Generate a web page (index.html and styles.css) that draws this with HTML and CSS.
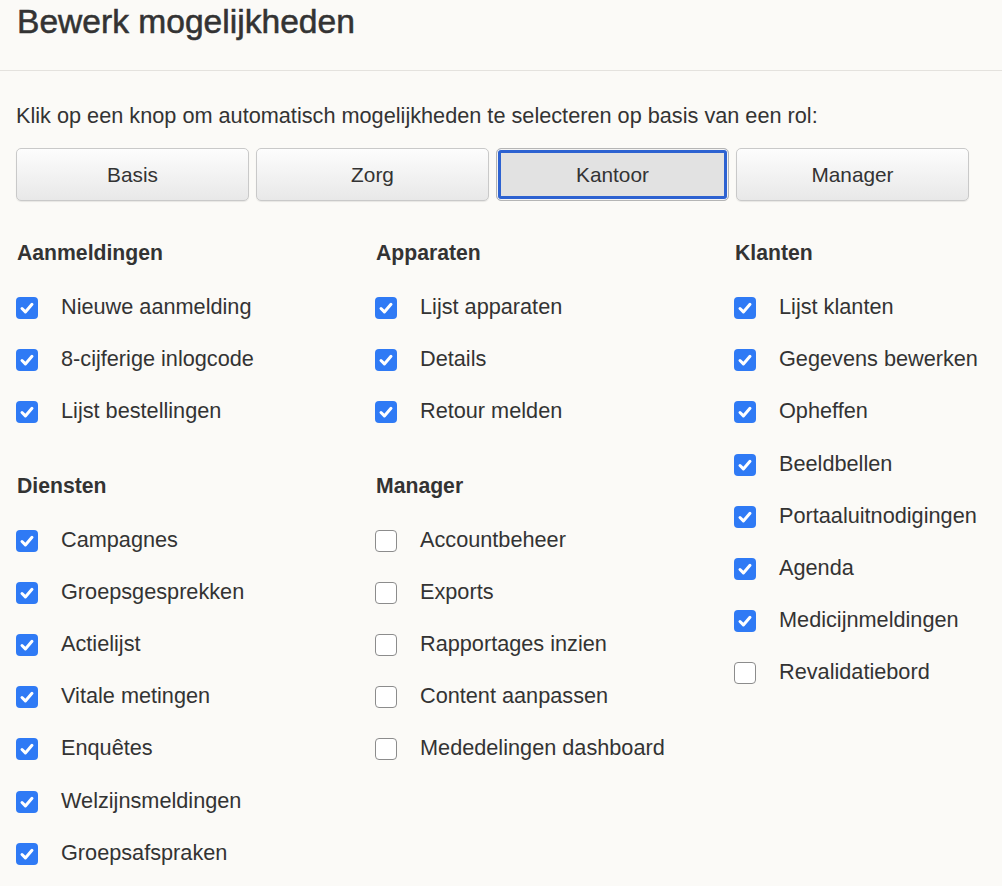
FILE: index.html
```html
<!DOCTYPE html>
<html lang="nl">
<head>
    <meta charset="UTF-8">
    <meta name="viewport" content="width=device-width, initial-scale=1.0">
    <title>Bewerk mogelijkheden</title>
    <link rel="stylesheet" href="styles.css">
</head>
<body>

    <div class="header">
        <h1>Bewerk mogelijkheden</h1>
    </div>

    <div class="content">
        <p class="intro">Klik op een knop om automatisch mogelijkheden te selecteren op basis van een rol:</p>

        <div class="roles">
            <button class="role">Basis</button>
            <button class="role">Zorg</button>
            <button class="role active">Kantoor</button>
            <button class="role">Manager</button>
        </div>

        <div class="columns">
            <div class="column">
                <h2>Aanmeldingen</h2>
                <label class="item"><span class="box checked"><svg viewBox="0 0 22 22"><path d="M6 11.5l3.4 3.4 6.6-7.6"/></svg></span>Nieuwe aanmelding</label>
                <label class="item"><span class="box checked"><svg viewBox="0 0 22 22"><path d="M6 11.5l3.4 3.4 6.6-7.6"/></svg></span>8-cijferige inlogcode</label>
                <label class="item"><span class="box checked"><svg viewBox="0 0 22 22"><path d="M6 11.5l3.4 3.4 6.6-7.6"/></svg></span>Lijst bestellingen</label>

                <h2 class="next">Diensten</h2>
                <label class="item"><span class="box checked"><svg viewBox="0 0 22 22"><path d="M6 11.5l3.4 3.4 6.6-7.6"/></svg></span>Campagnes</label>
                <label class="item"><span class="box checked"><svg viewBox="0 0 22 22"><path d="M6 11.5l3.4 3.4 6.6-7.6"/></svg></span>Groepsgesprekken</label>
                <label class="item"><span class="box checked"><svg viewBox="0 0 22 22"><path d="M6 11.5l3.4 3.4 6.6-7.6"/></svg></span>Actielijst</label>
                <label class="item"><span class="box checked"><svg viewBox="0 0 22 22"><path d="M6 11.5l3.4 3.4 6.6-7.6"/></svg></span>Vitale metingen</label>
                <label class="item"><span class="box checked"><svg viewBox="0 0 22 22"><path d="M6 11.5l3.4 3.4 6.6-7.6"/></svg></span>Enquêtes</label>
                <label class="item"><span class="box checked"><svg viewBox="0 0 22 22"><path d="M6 11.5l3.4 3.4 6.6-7.6"/></svg></span>Welzijnsmeldingen</label>
                <label class="item"><span class="box checked"><svg viewBox="0 0 22 22"><path d="M6 11.5l3.4 3.4 6.6-7.6"/></svg></span>Groepsafspraken</label>
            </div>

            <div class="column">
                <h2>Apparaten</h2>
                <label class="item"><span class="box checked"><svg viewBox="0 0 22 22"><path d="M6 11.5l3.4 3.4 6.6-7.6"/></svg></span>Lijst apparaten</label>
                <label class="item"><span class="box checked"><svg viewBox="0 0 22 22"><path d="M6 11.5l3.4 3.4 6.6-7.6"/></svg></span>Details</label>
                <label class="item"><span class="box checked"><svg viewBox="0 0 22 22"><path d="M6 11.5l3.4 3.4 6.6-7.6"/></svg></span>Retour melden</label>

                <h2 class="next">Manager</h2>
                <label class="item"><span class="box"></span>Accountbeheer</label>
                <label class="item"><span class="box"></span>Exports</label>
                <label class="item"><span class="box"></span>Rapportages inzien</label>
                <label class="item"><span class="box"></span>Content aanpassen</label>
                <label class="item"><span class="box"></span>Mededelingen dashboard</label>
            </div>

            <div class="column">
                <h2>Klanten</h2>
                <label class="item"><span class="box checked"><svg viewBox="0 0 22 22"><path d="M6 11.5l3.4 3.4 6.6-7.6"/></svg></span>Lijst klanten</label>
                <label class="item"><span class="box checked"><svg viewBox="0 0 22 22"><path d="M6 11.5l3.4 3.4 6.6-7.6"/></svg></span>Gegevens bewerken</label>
                <label class="item"><span class="box checked"><svg viewBox="0 0 22 22"><path d="M6 11.5l3.4 3.4 6.6-7.6"/></svg></span>Opheffen</label>
                <label class="item"><span class="box checked"><svg viewBox="0 0 22 22"><path d="M6 11.5l3.4 3.4 6.6-7.6"/></svg></span>Beeldbellen</label>
                <label class="item"><span class="box checked"><svg viewBox="0 0 22 22"><path d="M6 11.5l3.4 3.4 6.6-7.6"/></svg></span>Portaaluitnodigingen</label>
                <label class="item"><span class="box checked"><svg viewBox="0 0 22 22"><path d="M6 11.5l3.4 3.4 6.6-7.6"/></svg></span>Agenda</label>
                <label class="item"><span class="box checked"><svg viewBox="0 0 22 22"><path d="M6 11.5l3.4 3.4 6.6-7.6"/></svg></span>Medicijnmeldingen</label>
                <label class="item"><span class="box"></span>Revalidatiebord</label>
            </div>
        </div>
    </div>

</body>
</html>
```

FILE: styles.css
```css
/* Page */
body {
    background-color: #fbfaf7;
    color: #333;
    font-family: "Liberation Sans", Arial, sans-serif;
    margin: 0;
    padding: 0;
    overflow: hidden;
}

/* Title bar */
.header {
    height: 70px;
    padding: 0 17px;
    border-bottom: 1px solid #e4e2de;
}

h1 {
    margin: 0;
    font-size: 33.6px;
    font-weight: normal;
    line-height: 43px;
    -webkit-text-stroke: 0.55px #333;
}

.content {
    padding: 31px 16px 0 16px;
}

.intro {
    margin: 0;
    font-size: 21.7px;
    line-height: 28px;
}

/* Role buttons */
.roles {
    display: grid;
    grid-template-columns: repeat(4, 233px);
    gap: 7px;
    margin-top: 18px;
}

.role {
    height: 53px;
    font-family: "Liberation Sans", Arial, sans-serif;
    font-size: 20.8px;
    color: #333;
    border: 1px solid #c9c9c9;
    border-radius: 5px;
    background: linear-gradient(#fdfdfd, #e8e8e8);
    box-shadow: 0 1px 1px rgba(0, 0, 0, 0.08);
    cursor: pointer;
}

.role.active {
    background: #e2e2e2;
    border-color: #b5b5b5;
    box-shadow: inset 0 0 0 1px #f4f4f4, inset 0 0 0 4px #2d62d1;
}

/* Permission columns */
.columns {
    display: grid;
    grid-template-columns: 359px 359px 1fr;
    margin-top: 38px;
    white-space: nowrap;
}

h2 {
    margin: 0 0 14px 1px;
    font-size: 21.2px;
    font-weight: bold;
    line-height: 28px;
}

h2.next {
    margin-top: 34px;
}

.item {
    display: flex;
    align-items: center;
    gap: 23px;
    height: 52.2px;
    font-size: 21.7px;
    cursor: pointer;
}

.box {
    box-sizing: border-box;
    width: 22px;
    height: 22px;
    flex: none;
    margin-top: 2px;
    border: 1.5px solid #8c8c8c;
    border-radius: 4px;
    background-color: #fff;
}

.box.checked {
    border: none;
    background-color: #2f7af5;
}

.box svg {
    display: block;
    width: 22px;
    height: 22px;
    fill: none;
    stroke: #fff;
    stroke-width: 3;
    stroke-linecap: round;
    stroke-linejoin: round;
}
```
